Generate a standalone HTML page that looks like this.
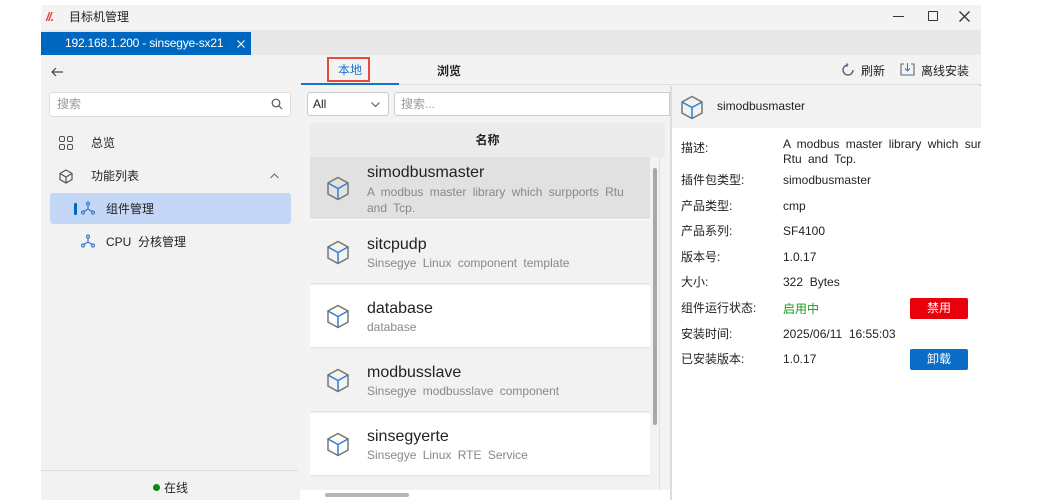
<!DOCTYPE html>
<html><head><meta charset="utf-8"><style>
*{box-sizing:border-box;margin:0;padding:0}
body{width:1051px;height:503px;background:#fff;position:relative;overflow:hidden;font-family:"Liberation Sans","Noto Sans CJK SC",sans-serif;font-size:12px;color:#222;line-height:15px}
.a{position:absolute;white-space:nowrap}
</style></head><body>
<div class="a" style="left:41px;top:5px;width:940px;height:495px;background:#f3f3f3;border-right:1px solid #999"></div>
<div class="a" style="left:41px;top:5px;width:940px;height:25px;background:#f3f3f3"></div>
<div class="a" style="left:46px;top:10px;color:#e53935;font-weight:bold;font-style:italic;font-size:12px;letter-spacing:-1px">//.</div>
<div class="a" style="left:69px;top:10px;font-size:12px">目标机管理</div>
<div class="a" style="left:893px;top:16px;width:11px;height:1px;background:#333"></div>
<div class="a" style="left:928px;top:11px;width:10px;height:10px;border:1px solid #333;border-radius:1px"></div>
<svg class="a" style="left:959px;top:11px" width="11" height="11" stroke="#333" stroke-width="1.3"><path d="M0.5 0.5L10.5 10.5M10.5 0.5L0.5 10.5"/></svg>
<div class="a" style="left:41px;top:30px;width:940px;height:25px;background:#e8e8e8"></div>
<div class="a" style="left:41px;top:32px;width:210px;height:23px;background:#0067c0;color:#fff;font-size:12px;padding:4px 0 0 24px;letter-spacing:-0.2px">192.168.1.200 - sinsegye-sx21</div>
<svg class="a" style="left:237px;top:40px" width="8" height="8" stroke="#fff" stroke-width="1.1"><path d="M0.5 0.5L7.5 7.5M7.5 0.5L0.5 7.5"/></svg>
<div class="a" style="left:41px;top:55px;width:259px;height:445px;background:#f2f2f2"></div>
<svg class="a" style="left:51px;top:67px" width="13" height="10" fill="none" stroke="#444" stroke-width="1.2"><path d="M12 5H1M5 1L1 5L5 9"/></svg>
<div class="a" style="left:49px;top:92px;width:242px;height:25px;background:#fff;border:1px solid #ddd;border-radius:3px;color:#999;padding:4px 0 0 7px">搜索</div>
<svg class="a" style="left:271px;top:98px" width="12" height="12"><circle cx="5" cy="5" r="3.8" fill="none" stroke="#555" stroke-width="1.2"/><path d="M8 8l3 3" stroke="#555" stroke-width="1.2"/></svg>
<svg class="a" style="left:59px;top:136px" width="14" height="14" fill="none" stroke="#555"><rect x="0.5" y="0.5" width="5" height="5" rx="1.5"/><rect x="8.5" y="0.5" width="5" height="5" rx="1.5"/><rect x="0.5" y="8.5" width="5" height="5" rx="1.5"/><rect x="8.5" y="8.5" width="5" height="5" rx="1.5"/></svg>
<div class="a" style="left:91px;top:136px">总览</div>
<svg class="a" style="left:59px;top:169px" width="14" height="15" fill="none" stroke="#555" stroke-width="1.2"><path d="M7 1L13 4.5V10.5L7 14L1 10.5V4.5Z M1 4.5L7 8L13 4.5 M7 8V14"/></svg>
<div class="a" style="left:91px;top:169px">功能列表</div>
<svg class="a" style="left:270px;top:173px" width="9" height="6" fill="none" stroke="#666"><path d="M0.5 5L4.5 1L8.5 5"/></svg>
<div class="a" style="left:50px;top:193px;width:241px;height:31px;background:#c5d7f7;border-radius:3px"></div>
<div class="a" style="left:74px;top:203px;width:3px;height:12px;background:#0067c0;border-radius:1px"></div>
<svg class="a" style="left:81px;top:201px" width="14" height="14" fill="none" stroke="#3a78c9" stroke-width="1.2"><circle cx="7" cy="2.5" r="1.5"/><circle cx="2" cy="11.5" r="1.5"/><circle cx="12" cy="11.5" r="1.5"/><path d="M7 4V8L3 10.5M7 8l4 2.5"/></svg>
<div class="a" style="left:106px;top:202px">组件管理</div>
<svg class="a" style="left:81px;top:234px" width="14" height="14" fill="none" stroke="#3a78c9" stroke-width="1.2"><circle cx="7" cy="2.5" r="1.5"/><circle cx="2" cy="11.5" r="1.5"/><circle cx="12" cy="11.5" r="1.5"/><path d="M7 4V8L3 10.5M7 8l4 2.5"/></svg>
<div class="a" style="left:106px;top:235px">CPU &nbsp;分核管理</div>
<div class="a" style="left:41px;top:470px;width:257px;height:1px;background:#ddd"></div>
<div class="a" style="left:153px;top:484px;width:7px;height:7px;border-radius:50%;background:#0a8a0a"></div>
<div class="a" style="left:164px;top:481px">在线</div>
<div class="a" style="left:300px;top:55px;width:681px;height:30px;background:#f3f3f3;border-bottom:1px solid #ddd"></div>
<div class="a" style="left:301px;top:83px;width:98px;height:2px;background:#1a73c7"></div>
<div class="a" style="left:327px;top:57px;width:43px;height:25px;border:2px solid #e84a3a;color:#1a73c7;padding:4px 0 0 9px">本地</div>
<div class="a" style="left:437px;top:64px;font-weight:bold">浏览</div>
<svg class="a" style="left:841px;top:63px" width="14" height="14" fill="none" stroke="#555" stroke-width="1.3"><path d="M12 7A5 5 0 1 1 7 2"/><path d="M7 2l-1.5-1.5M7 2L5.5 3.5" stroke="#3a78c9"/></svg>
<div class="a" style="left:861px;top:64px">刷新</div>
<svg class="a" style="left:900px;top:62px" width="15" height="15" fill="none" stroke="#666" stroke-width="1.1"><path d="M4 2H1V13H14V2H11"/><path d="M7.5 1V9M5 6.5l2.5 2.5 2.5-2.5" stroke="#3a78c9"/></svg>
<div class="a" style="left:921px;top:64px">离线安装</div>
<div class="a" style="left:300px;top:86px;width:370px;height:414px;background:#f3f3f3"></div>
<div class="a" style="left:307px;top:92px;width:82px;height:24px;background:#fff;border:1px solid #ccc;border-radius:3px;padding:4px 0 0 5px">All</div>
<svg class="a" style="left:371px;top:102px" width="9" height="5" fill="none" stroke="#555"><path d="M0.5 0.5L4.5 4.5L8.5 0.5"/></svg>
<div class="a" style="left:394px;top:92px;width:276px;height:24px;background:#fff;border:1px solid #ccc;border-radius:3px 0 0 3px;padding:4px 0 0 6px;color:#999">搜索...</div>
<div class="a" style="left:310px;top:123px;width:350px;height:367px;background:#f2f2f2;border-right:1px solid #e0e0e0"></div>
<div class="a" style="left:310px;top:123px;width:355px;height:34px;background:#ebebeb;text-align:center;padding-top:10px;font-weight:bold">名称</div>
<div class="a" style="left:310px;top:157px;width:340px;height:62px;background:#e1e1e1"></div>
<div class="a" style="left:310px;top:219px;width:340px;height:1px;background:#fff"></div>
<div class="a" style="left:310px;top:220px;width:340px;height:64px;background:#f2f2f2;border-bottom:1px solid #e3e3e3"></div>
<div class="a" style="left:310px;top:285px;width:340px;height:63px;background:#fff;border-bottom:1px solid #e3e3e3"></div>
<div class="a" style="left:310px;top:349px;width:340px;height:63px;background:#f2f2f2;border-bottom:1px solid #e3e3e3"></div>
<div class="a" style="left:310px;top:413px;width:340px;height:63px;background:#fff;border-bottom:1px solid #e3e3e3"></div>
<div class="a" style="left:310px;top:477px;width:340px;height:13px;background:#f2f2f2"></div>
<div class="a" style="left:653px;top:168px;width:4px;height:257px;background:#a8a8a8;border-radius:2px"></div>
<div class="a" style="left:300px;top:490px;width:370px;height:10px;background:#fff"></div>
<div class="a" style="left:325px;top:493px;width:84px;height:4px;background:#b5b5b5;border-radius:2px"></div>
<svg width="0" height="0" style="position:absolute"><defs><g id="cb" fill="none" stroke-width="1.5"><path d="M12 1.5L22 7V18L12 23.5L2 18V7Z" stroke="#777"/><path d="M2 7L12 12.5L22 7M12 12.5V23.5" stroke="#2d7fd4"/></g></defs></svg>
<svg class="a" style="left:326px;top:176px" width="24" height="25"><use href="#cb"/></svg>
<svg class="a" style="left:326px;top:240px" width="24" height="25"><use href="#cb"/></svg>
<svg class="a" style="left:326px;top:304px" width="24" height="25"><use href="#cb"/></svg>
<svg class="a" style="left:326px;top:368px" width="24" height="25"><use href="#cb"/></svg>
<svg class="a" style="left:326px;top:432px" width="24" height="25"><use href="#cb"/></svg>
<div class="a" style="left:367px;top:164px;font-size:16px;line-height:18px">simodbusmaster</div>
<div class="a" style="left:367px;top:184px;color:#888;word-spacing:3px;width:260px;line-height:16px;overflow:hidden;height:32px">A modbus master library which surpports Rtu<br>and Tcp.</div>
<div class="a" style="left:367px;top:236px;font-size:16px;line-height:18px">sitcpudp</div>
<div class="a" style="left:367px;top:256px;color:#888;word-spacing:3px">Sinsegye Linux component template</div>
<div class="a" style="left:367px;top:300px;font-size:16px;line-height:18px">database</div>
<div class="a" style="left:367px;top:320px;color:#888">database</div>
<div class="a" style="left:367px;top:364px;font-size:16px;line-height:18px">modbusslave</div>
<div class="a" style="left:367px;top:384px;color:#888;word-spacing:3px">Sinsegye modbusslave component</div>
<div class="a" style="left:367px;top:428px;font-size:16px;line-height:18px">sinsegyerte</div>
<div class="a" style="left:367px;top:448px;color:#888;word-spacing:3px">Sinsegye Linux RTE Service</div>
<div class="a" style="left:670px;top:86px;width:311px;height:414px;background:#fff;border-left:2px solid #ddd"></div>
<div class="a" style="left:672px;top:86px;width:309px;height:42px;background:#f2f2f2"></div>
<svg class="a" style="left:680px;top:95px" width="24" height="25"><use href="#cb"/></svg>
<div class="a" style="left:717px;top:99px">simodbusmaster</div>
<div class="a" style="left:681px;top:141px">描述:</div>
<div class="a" style="left:783px;top:137px;width:198px;overflow:hidden;line-height:15px;word-spacing:3px">A modbus master library which surpports<br>Rtu and Tcp.</div>
<div class="a" style="left:681px;top:173px">插件包类型:</div><div class="a" style="left:783px;top:173px">simodbusmaster</div>
<div class="a" style="left:681px;top:199px">产品类型:</div><div class="a" style="left:783px;top:199px">cmp</div>
<div class="a" style="left:681px;top:224px">产品系列:</div><div class="a" style="left:783px;top:224px">SF4100</div>
<div class="a" style="left:681px;top:250px">版本号:</div><div class="a" style="left:783px;top:250px">1.0.17</div>
<div class="a" style="left:681px;top:275px">大小:</div><div class="a" style="left:783px;top:275px">322 &nbsp;Bytes</div>
<div class="a" style="left:681px;top:301px">组件运行状态:</div><div class="a" style="left:783px;top:302px;color:#1a9a1a">启用中</div>
<div class="a" style="left:910px;top:298px;width:58px;height:21px;background:#e8000b;color:#fff;text-align:center;padding-top:3px;border-radius:2px">禁用</div>
<div class="a" style="left:681px;top:327px">安装时间:</div><div class="a" style="left:783px;top:327px">2025/06/11 &nbsp;16:55:03</div>
<div class="a" style="left:681px;top:352px">已安装版本:</div><div class="a" style="left:783px;top:352px">1.0.17</div>
<div class="a" style="left:910px;top:349px;width:58px;height:21px;background:#0a6cc4;color:#fff;text-align:center;padding-top:3px;border-radius:2px">卸载</div>
</body></html>
